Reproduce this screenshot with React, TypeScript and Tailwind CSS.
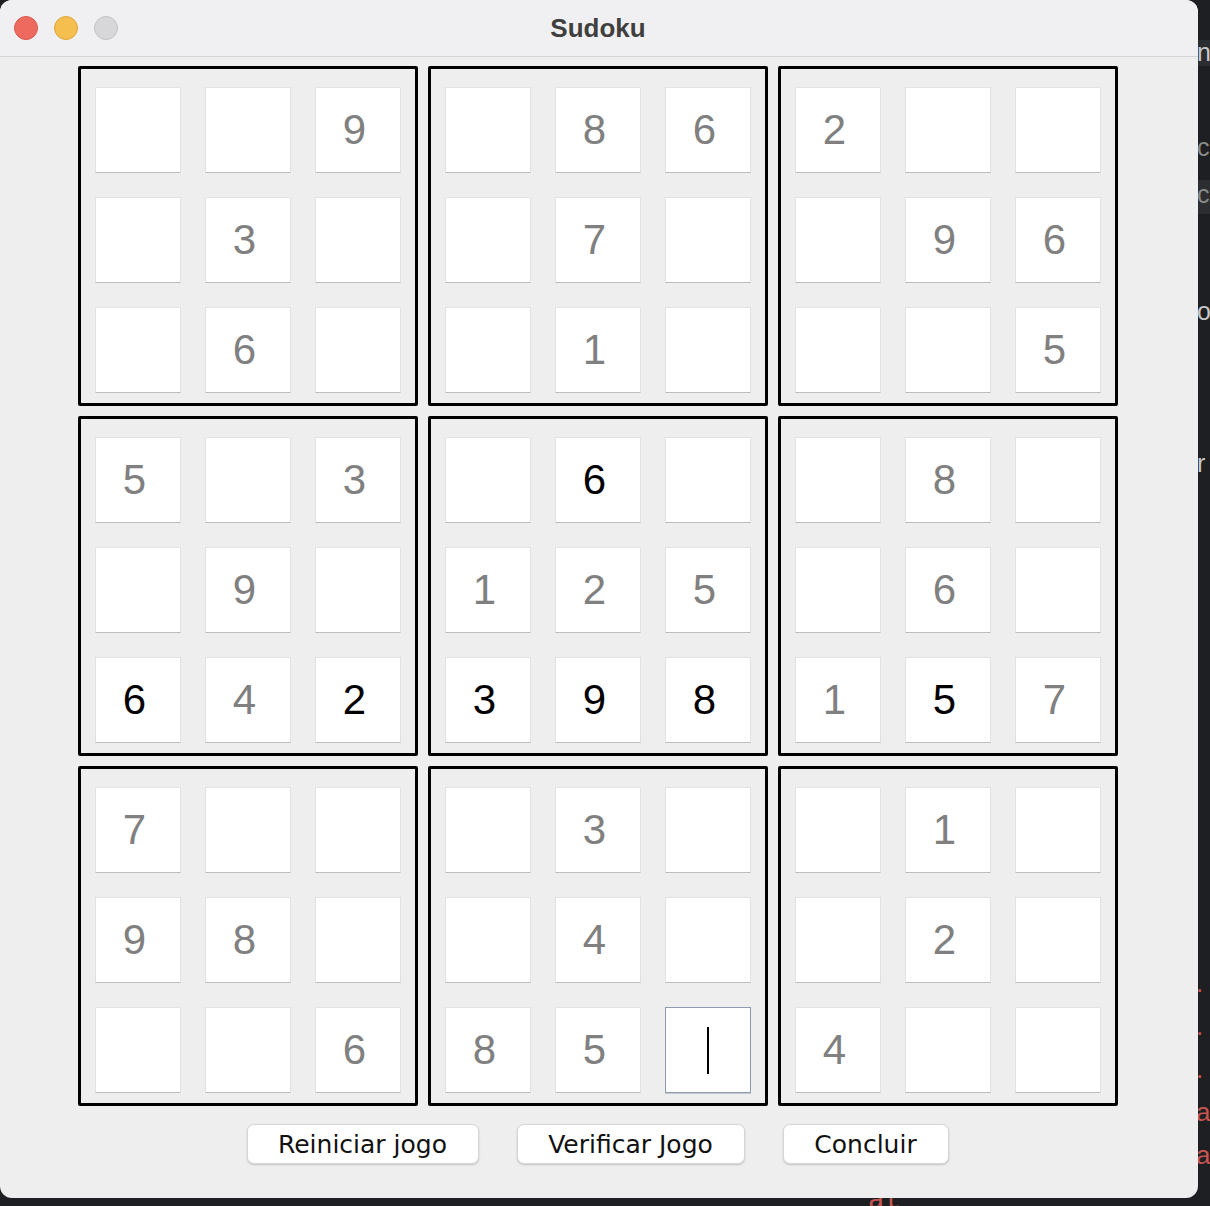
const BLOCKS = [
  [".", ".", "9", ".", "3", ".", ".", "6", "."],
  [".", "8", "6", ".", "7", ".", ".", "1", "."],
  ["2", ".", ".", ".", "9", "6", ".", ".", "5"],
  ["5", ".", "3", ".", "9", ".", "6!", "4", "2!"],
  [".", "6!", ".", "1", "2", "5", "3!", "9!", "8!"],
  [".", "8", ".", ".", "6", ".", "1", "5!", "7"],
  ["7", ".", ".", "9", "8", ".", ".", ".", "6"],
  [".", "3", ".", ".", "4", ".", "8", "5", "_"],
  [".", "1", ".", ".", "2", ".", "4", ".", "."],
];

/* ".": empty field, "n": given (grey), "n!": typed by the player (black), "_": focused field */
function Cell({ v }: { v: string }) {
  if (v === "_") {
    return (
      <div className="flex h-[86px] w-[86px] items-center justify-center border border-[#8f9bae] bg-white shadow-[0_1px_0_#c4c8cf]">
        <span className="h-[47px] w-[2px] bg-black" />
      </div>
    );
  }
  const typed = v.endsWith("!");
  const digit = v === "." ? "" : v.replace("!", "");
  return (
    <div
      className={`flex h-[86px] w-[86px] items-center justify-center border border-[#e2e2e2] border-b-[#bdbdbd] bg-white pr-[6px] font-['Liberation_Sans',Arial,sans-serif] text-[42px] leading-none ${
        typed ? "text-black" : "text-[#808080]"
      }`}
    >
      {digit}
    </div>
  );
}

function Block({ cells }: { cells: string[] }) {
  return (
    <div className="h-[340px] w-[340px] rounded-[2px] border-[3px] border-black px-[14px] pb-[10px] pt-[18px]">
      <div className="grid grid-cols-3 gap-[24px]">
        {cells.map((v, i) => (
          <Cell key={i} v={v} />
        ))}
      </div>
    </div>
  );
}

function MacButton({ label, width }: { label: string; width: string }) {
  return (
    <button
      className={`${width} h-[40px] rounded-[7px] border border-[#d6d6d6] bg-white font-['DejaVu_Sans',sans-serif] text-[25px] leading-none text-[#111111] shadow-[0_1px_2px_rgba(0,0,0,0.18)]`}
    >
      {label}
    </button>
  );
}

export default function App() {
  return (
    <div className="relative h-[1206px] w-[1210px] overflow-hidden bg-[#1e1f22] font-['Liberation_Sans',Arial,sans-serif]">
      {/* editor peeking out behind the window */}
      <div className="absolute left-0 top-[40px] h-[26px] w-full bg-[#2b2d30]" />
      <div className="absolute left-0 top-[180px] h-[34px] w-full bg-[#2b2d30]" />
      <div className="absolute left-[1197px] top-[40px] flex flex-col text-[25px] leading-none">
        <span className="text-[#c8c8c8]">n</span>
        <span className="mt-[70px] text-[#8a8a8a]">co</span>
        <span className="mt-[22px] text-[#8a8a8a]">c</span>
        <span className="mt-[92px] text-[#c8c8c8]">o</span>
        <span className="mt-[127px] text-[#c8c8c8]">r</span>
      </div>
      <div className="absolute left-[1196px] top-[962px] whitespace-pre text-[26px] leading-[43px] text-[#c75450]">
        {". .\n. .\n. .\na\na"}
      </div>
      <span className="absolute left-[868px] top-[1180px] font-['Liberation_Mono',monospace] text-[28px] text-[#c75450]">
        at java.desktop/java.a
      </span>

      {/* app window */}
      <div className="relative flex h-[1198px] w-[1198px] flex-col overflow-hidden rounded-[12px] bg-[#eeeeee]">
        <div className="relative flex h-[57px] shrink-0 items-center justify-center border-b border-[#d4d4d4] bg-[#f0f0f2]">
          <div className="absolute left-[14px] top-[16px] flex gap-[16px]">
            <span className="h-[24px] w-[24px] rounded-full border border-[#d8584c] bg-[#ee6a5f]" />
            <span className="h-[24px] w-[24px] rounded-full border border-[#dea53c] bg-[#f5bf4f]" />
            <span className="h-[24px] w-[24px] rounded-full border border-[#c2c2c4] bg-[#d7d7d9]" />
          </div>
          <span className="pr-[2px] text-[26px] font-bold text-[#3f3f3f]">Sudoku</span>
        </div>

        <div className="flex flex-col items-center pr-[3px] pt-[9px]">
          <div className="grid grid-cols-3 gap-[10px]">
            {BLOCKS.map((b, i) => (
              <Block key={i} cells={b} />
            ))}
          </div>
          <div className="mt-[18px] flex gap-[38px]">
            <MacButton label="Reiniciar jogo" width="w-[232px]" />
            <MacButton label="Verificar Jogo" width="w-[228px]" />
            <MacButton label="Concluir" width="w-[166px]" />
          </div>
        </div>
      </div>
    </div>
  );
}
